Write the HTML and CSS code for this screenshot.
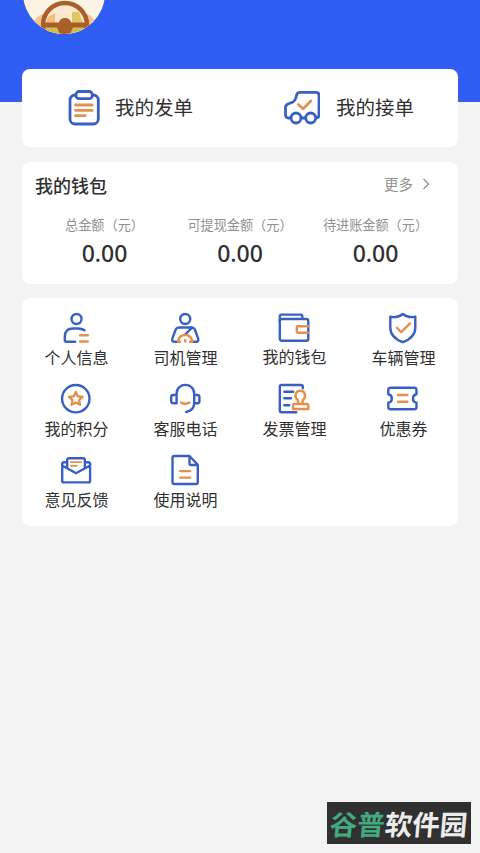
FILE: index.html
```html
<!DOCTYPE html>
<html lang="zh-CN">
<head>
<meta charset="utf-8">
<meta name="viewport" content="width=device-width, initial-scale=1">
<title>我的</title>
<link rel="stylesheet" href="styles.css">
</head>
<body>
<header class="hero">
  <svg class="avatar" viewBox="0 0 82 82">
    <defs><clipPath id="round"><circle cx="41" cy="41" r="41"/></clipPath></defs>
    <g clip-path="url(#round)">
      <rect width="82" height="82" fill="#fdf3e3"/>
      <path d="M10 82V70Q14 64 20 62H64Q70 64 72 70V82Z" fill="#f3c48d"/>
      <circle cx="42" cy="73" r="22" fill="#fbe8cf"/>
      <path d="M25 65L32 61V71H23Z" fill="#f8bd80"/>
      <path d="M49 60H56L60 71H49Z" fill="#dfc765"/>
      <path d="M22 75H62V82H22Z" fill="#cdbf50"/>
      <circle cx="42" cy="73" r="22" fill="none" stroke="#aa5e28" stroke-width="4.5"/>
      <path d="M20 70.5H36Q37 66 42 66T48 70.5H64V75.5H50L47 82H37L34 75.5H20Z" fill="#aa5e28"/>
    </g>
  </svg>
</header>
<main class="content">
  <section class="card orders">
    <a class="order">
      <svg class="icon" viewBox="0 0 36 36"><rect x="4" y="5" width="28.3" height="29" rx="5"/><rect class="paper" x="10" y="1.5" width="16.3" height="7.2" rx="3"/><path class="accent" d="M9.5 15H26.2M9.5 20.3H26.2M9.5 25.7H19.2"/></svg>
      <span>我的发单</span>
    </a>
    <a class="order taken">
      <svg class="icon" viewBox="0 0 36 36"><path d="M7 28H4.5Q1.5 28 1.5 25V17.5Q1.5 15 4 14L9 12Q11 11 11.8 8L12.8 4.5Q13.5 2.3 16 2.3H32Q35 2.3 35 5.3V25Q35 28 32 28M17 28H21.5"/><circle cx="12" cy="28" r="5"/><circle cx="26.7" cy="28" r="5"/><path class="accent" d="M14.3 14.5L19.2 18.8L26.8 11"/></svg>
      <span>我的接单</span>
    </a>
  </section>

  <section class="card wallet">
    <div class="wallet-head">
      <h2>我的钱包</h2>
      <a class="more">更多<svg class="chevron" viewBox="0 0 8 12"><path d="M1.5 1L6.5 6L1.5 11"/></svg></a>
    </div>
    <div class="amounts">
      <div class="amount"><span class="name">总金额（元）</span><strong>0.00</strong></div>
      <div class="amount"><span class="name">可提现金额（元）</span><strong>0.00</strong></div>
      <div class="amount"><span class="name">待进账金额（元）</span><strong>0.00</strong></div>
    </div>
  </section>

  <nav class="card menu">
    <a class="item"><svg class="icon" viewBox="0 0 36 36"><circle cx="18.5" cy="9" r="5"/><path d="M17.2 31.7H8.3Q6.8 31.7 6.8 30.2V27Q6.8 18.5 15 18.5H20Q24 18.5 26.5 20.3"/><path class="accent" d="M22 25.2H29.8M22 31.5H29.8"/></svg><span>个人信息</span></a>
    <a class="item"><svg class="icon" viewBox="0 0 36 36"><circle cx="18.2" cy="9" r="5"/><path d="M11 31.7H7.5Q4.5 31.7 5.3 28.7L8.7 19.5Q9.6 17.5 12 17.5H24.5Q27 17.5 27.9 19.5L31.2 28.7Q32 31.7 29 31.7H25.3M25 17.6L18.2 24.5"/><path class="accent" d="M11 31.7Q12 25 18.2 25T25.3 31.7M18.2 31.5V30M11 31.7H13M23 31.7H25.3"/></svg><span>司机管理</span></a>
    <a class="item raised"><svg class="icon" viewBox="0 0 36 36"><rect x="3.8" y="9" width="28.5" height="21.8" rx="2"/><path d="M3.8 12V6.3Q3.8 4.6 5.5 4.6H24.5Q26.3 4.6 26.3 6.3V8.5"/><path class="accent" d="M32.2 16.2H22Q20.8 16.2 20.8 17.4V21.6Q20.8 22.8 22 22.8H32.2"/></svg><span>我的钱包</span></a>
    <a class="item"><svg class="icon" viewBox="0 0 36 36"><path d="M17.8 4Q22.5 8 30.3 6.8V17.5Q30.3 27.5 17.8 32.2Q5.3 27.5 5.3 17.5V6.8Q13 8 17.8 4Z"/><path class="accent" d="M12 17.7L16.2 22.2L25 13.3"/></svg><span>车辆管理</span></a>

    <a class="item"><svg class="icon" viewBox="0 0 36 36"><circle cx="17.8" cy="17.7" r="13.7"/><path class="accent" d="M17.8 11L19.8 15.3L24.6 15.9L21.1 19.1L22 23.8L17.8 21.5L13.6 23.8L14.5 19.1L11 15.9L15.8 15.3Z"/></svg><span>我的积分</span></a>
    <a class="item"><svg class="icon" viewBox="0 0 36 36"><path d="M9.6 22.3H6.3Q4.2 22.3 4.2 20.3V16Q4.2 14 6.3 14H9.6V22.3M27.2 14H30.4Q32.4 14 32.4 16V20.3Q32.4 22.3 30.4 22.3H27.2V14M9.6 14V12.5C9.6 1 27.2 1 27.2 12.5V22.3Q27 29.5 19.2 31"/><path class="accent" d="M14.2 21.6Q18.2 24 22.3 21.6"/></svg><span>客服电话</span></a>
    <a class="item"><svg class="icon" viewBox="0 0 36 36"><path d="M26.8 7.3V5.8Q26.8 4 25 4H5.6Q3.8 4 3.8 5.8V29.5Q3.8 31.3 5.6 31.3H20.3M8.3 10.8H17.2M8.3 17.3H15M8.3 24.2H13.2"/><path class="accent" d="M22 23V19.5C17.5 15.5 19.5 9.8 24.3 9.8S31 15.5 26.6 19.5V23M18.6 23H30.6Q32.3 23 32.3 24.7V28H17V24.7Q17 23 18.6 23Z"/></svg><span>发票管理</span></a>
    <a class="item"><svg class="icon" viewBox="0 0 36 36"><path d="M5.5 6.7H29.3Q31.5 6.7 31.5 9V13.3C26.8 14 26.8 21 31.5 21.7V26Q31.5 28.3 29.3 28.3H5.5Q3.3 28.3 3.3 26V21.7C8 21 8 14 3.3 13.3V9Q3.3 6.7 5.5 6.7Z"/><path class="accent" d="M13 14H22.3M13 20.7H22.3"/></svg><span>优惠券</span></a>

    <a class="item"><svg class="icon" viewBox="0 0 36 36"><path d="M9.2 10.3H6Q4.2 10.3 4.2 12V28.7Q4.2 30.4 6 30.4H30.4Q32.1 30.4 32.1 28.7V12Q32.1 10.3 30.4 10.3H26.8M4.2 13.5L18 21.3L32.1 13.5M9.2 16V8Q9.2 6.3 11 6.3H25Q26.8 6.3 26.8 8V16"/><path class="accent thin" d="M12.8 10.2H23.3M12.8 13.9H18.8"/></svg><span>意见反馈</span></a>
    <a class="item"><svg class="icon" viewBox="0 0 36 36"><path d="M7.2 4H22.5L30.8 12.8V30.3Q30.8 32 29 32H7.2Q5.5 32 5.5 30.3V5.7Q5.5 4 7.2 4ZM22.5 4.5V11.3Q22.5 13 24.2 13H30.3"/><path class="accent" d="M13.2 19.1H23.2M13.2 25.6H23.2"/></svg><span>使用说明</span></a>
  </nav>
</main>
<div class="stamp"><div class="stamp-text"><span class="green">谷普</span>软件园</div></div>
</body>
</html>
```
FILE: styles.css
```css
* {
  box-sizing: border-box;
}

body {
  margin: 0;
  min-height: 853px;
  background: #f3f3f3;
  color: #303030;
  font-family: "Noto Sans CJK SC", sans-serif;
  overflow: hidden;
}

.hero {
  position: relative;
  height: 102px;
  background: #305df4;
  overflow: hidden;
}

.avatar {
  position: absolute;
  left: 23px;
  top: -48px;
  width: 82px;
  height: 82px;
}

.content {
  position: relative;
  display: flex;
  flex-direction: column;
  margin: -33px 22px 0;
}

.card {
  background: #fff;
  border-radius: 8px;
}

.icon {
  flex: none;
  width: 36px;
  height: 36px;
  fill: none;
  stroke: #3860c4;
  stroke-width: 2.4;
  stroke-linecap: round;
  stroke-linejoin: round;
}

.icon .accent {
  stroke: #e2914e;
}

.icon .thin {
  stroke-width: 1.8;
}

.icon .paper {
  fill: #fff;
}

.orders {
  display: grid;
  grid-template-columns: 1fr 1fr;
  height: 78px;
  margin-bottom: 15px;
}

.order {
  display: flex;
  align-items: center;
  padding-left: 44px;
  gap: 13px;
  font-size: 19.5px;
  line-height: 28px;
}

.order span {
  margin-bottom: 2px;
}

.taken {
  gap: 16px;
}

.order .icon {
  stroke-width: 2.8;
}

.wallet {
  height: 122px;
  padding: 10px 13px 0;
  margin-bottom: 14px;
}

.wallet-head {
  display: flex;
  justify-content: space-between;
  height: 26px;
}

.wallet-head h2 {
  margin: 0;
  font-size: 18px;
  line-height: 26px;
  font-weight: 500;
}

.more {
  display: flex;
  align-items: center;
  gap: 9px;
  height: 22px;
  padding-right: 15px;
  color: #929292;
  font-size: 14.5px;
}

.chevron {
  width: 8px;
  height: 12px;
  margin-top: 2px;
  fill: none;
  stroke: #929292;
  stroke-width: 1.3;
}

.amounts {
  display: grid;
  grid-template-columns: repeat(3, 135.5px);
  justify-content: center;
  margin-top: 17px;
}

.amount {
  display: flex;
  flex-direction: column;
  align-items: center;
}

.name {
  color: #929292;
  font-size: 13.2px;
  line-height: 20px;
  letter-spacing: -0.05px;
  white-space: nowrap;
}

.amount strong {
  font-family: "Noto Sans", "Noto Sans CJK SC", sans-serif;
  font-size: 23px;
  line-height: 36px;
  font-weight: 500;
}

.menu {
  display: grid;
  grid-template-columns: repeat(4, 1fr);
  grid-auto-rows: 71px;
  height: 228px;
  padding-top: 12px;
}

.item {
  display: flex;
  flex-direction: column;
  align-items: center;
  font-size: 16px;
  line-height: 22px;
}

.item .icon {
  margin-right: 1px;
}

.raised span {
  margin-top: -1px;
}

.stamp {
  position: absolute;
  left: 327px;
  top: 802px;
  width: 144px;
  height: 42px;
  background: #303030;
  display: flex;
  align-items: center;
  justify-content: center;
}

.stamp-text {
  color: #ececec;
  font-size: 27.5px;
  line-height: 42px;
  font-weight: 700;
  white-space: nowrap;
  transform: skewX(-5deg);
}

.green {
  color: #42a980;
}
```
